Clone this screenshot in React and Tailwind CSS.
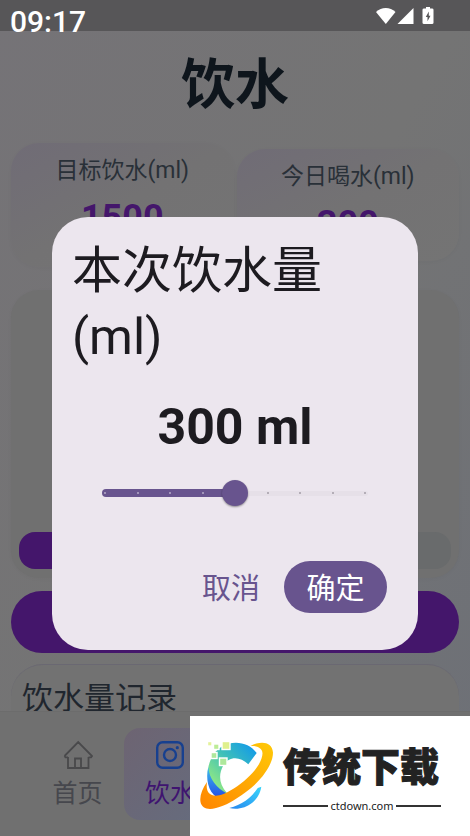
import { useState } from "react";

const TEXT = "font-['Roboto','Noto_Sans_CJK_SC',sans-serif]";

function StatusBar() {
  return (
    <header className="flex h-[31px] shrink-0 items-center justify-between bg-[#575658] pr-9 pl-[10px]">
      <span className="pt-3 text-[30px] leading-[30px] font-medium text-white">09:17</span>
      <svg className="h-[18px] w-[58px]" viewBox="0 0 58 18" fill="white" aria-hidden="true">
        <path d="M0 5C5.500-.5 14-.5 19.500 5L9.800 17z" />
        <path d="M37.500 1v16H21.500z" />
        <path
          fillRule="evenodd"
          d="M50 0h4v1.500h2q1.500 0 1.500 1.300v13q0 1.200-1.500 1.200h-8q-1.500 0-1.500-1.200v-13q0-1.300 1.500-1.300h2zM52.800 4.500l-3 5.500h1.700v4.300l3-5.500h-1.700z"
        />
      </svg>
    </header>
  );
}

function StatCard({ label, value, className }) {
  return (
    <section
      className={`flex flex-1 flex-col items-center rounded-[28px] bg-linear-to-br from-[#706c76] via-[#737273] to-[#747474] pt-3 shadow-[0_1px_4px_rgba(0,0,0,0.03)] ${className}`}
    >
      <h2 className="text-[23px] leading-8 text-[#293038]">{label}</h2>
      <p className="mt-[13px] text-[36px] leading-9 font-bold text-[#44166b]">{value}</p>
    </section>
  );
}

function HomeIcon() {
  return (
    <svg className="size-[30px]" viewBox="0 0 30 30" fill="none" stroke="#49494b" strokeWidth="1.800" aria-hidden="true">
      <path d="M5 17v11h20.500V17M1.500 16L15.200 2 29 16l-1 1.300h-2.500M1.500 16l1 1.300H5M12 28v-9.500h6V28" />
    </svg>
  );
}

function CameraIcon() {
  return (
    <svg className="size-[30px]" viewBox="0 0 30 30" fill="none" stroke="#17408f" strokeWidth="2.400" aria-hidden="true">
      <rect x="2.200" y="2.200" width="25.600" height="25.600" rx="5.500" />
      <circle cx="15" cy="15" r="6" />
      <circle cx="22.300" cy="7.700" r="1.600" fill="#17408f" stroke="none" />
    </svg>
  );
}

function Logo() {
  return (
    <svg className="h-[72px] w-[76px] shrink-0" viewBox="0 0 76 72" aria-hidden="true">
      <defs>
        <linearGradient id="arc" gradientUnits="userSpaceOnUse" x1="16" y1="46" x2="56" y2="8">
          <stop offset="0" stopColor="#8fe884" />
          <stop offset=".5" stopColor="#3fc0b8" />
          <stop offset="1" stopColor="#139be8" />
        </linearGradient>
        <linearGradient id="deep" x1="0" y1="0" x2="0" y2="1">
          <stop offset="0" stopColor="#3cbcec" />
          <stop offset="1" stopColor="#2450e6" />
        </linearGradient>
        <linearGradient id="ring" x1="0" y1="1" x2="1" y2="0">
          <stop offset="0" stopColor="#ff8500" />
          <stop offset="1" stopColor="#ffc907" />
        </linearGradient>
        <linearGradient id="foot" x1="0" y1="1" x2="1" y2="0">
          <stop offset="0" stopColor="#2787ef" />
          <stop offset="1" stopColor="#38d5fb" />
        </linearGradient>
      </defs>
      <path d="M57.700 13L49.300 24.300C41 16 30 16 24.500 25c-5 9-5 19 3.500 28l-7 3C8 48 6 32 12 19 21-1 47-2 57.700 13z" fill="url(#arc)" />
      <path d="M9.300 27c1 12 8 21 19.500 27l-11 3.500C9 51 6.500 39 9.300 27z" fill="url(#deep)" />
      <path d="M30.300 68c12-3 22-10 28.500-20l3.500-1.300C60 62 45 71.500 30.300 68z" fill="url(#foot)" />
      <path
        d="M51.500 6C61 1 73 1 74 12.500 74 27 58 46 39 57.500 22 69 4 74 1.500 62 .5 56 3 49 8 42c-2 13 6 16 16.500 12C43 46 63 27 63.500 13.500 63.500 8 58 5.500 51.500 6z"
        fill="url(#ring)"
      />
      <g stroke="white" strokeWidth="1.400">
        <rect x="23" y="1.500" width="8" height="8" fill="#dff08d" />
        <rect x="20.500" y="18" width="7.500" height="7.500" fill="#aee89c" />
        <rect x="12" y="12.500" width="6" height="6" fill="#aee89c" />
        <rect x="14.500" y="4" width="5.500" height="5.500" fill="#bcec96" />
        <rect x="8.500" y="1.500" width="4.500" height="4.500" fill="#e4f29b" />
      </g>
    </svg>
  );
}

function Watermark() {
  return (
    <aside className="fixed right-0 bottom-0 z-20 flex h-[120px] w-[280px] items-center bg-white pl-[9px]">
      <Logo />
      <div className="ml-2 flex w-[158px] flex-col pt-1">
        <p className="text-[39px] leading-[48px] font-black whitespace-nowrap text-[#222] [-webkit-text-stroke:1px_#222]">
          传统下载
        </p>
        <div className="mt-2 flex items-center gap-[2px]">
          <span className="h-[2px] flex-1 bg-[#333]" />
          <span className="font-['Noto_Sans',sans-serif] text-[11px] leading-3 text-[#222]">ctdown.com</span>
          <span className="h-[2px] flex-1 bg-[#333]" />
        </div>
      </div>
    </aside>
  );
}

const STEPS = [0, 1, 2, 3, 4, 5, 6, 7, 8];

function AmountDialog() {
  const [step, setStep] = useState(4);
  const percent = (step / 8) * 100;
  return (
    <div className="fixed inset-0 z-10 flex items-center justify-center px-[52px] pt-[31px]">
      <div
        role="dialog"
        aria-modal="true"
        aria-labelledby="dialog-title"
        className="w-full rounded-[36px] bg-[#ece6ee] px-5 pt-[21px] pb-[37px] text-[#1d1b20]"
      >
        <h2 id="dialog-title" className="text-[50px] leading-[66px]">
          本次饮水量(ml)
        </h2>
        <output htmlFor="amount" className="mt-6 block text-center text-[50px] leading-[66px] font-bold">
          {100 + step * 50} ml
        </output>
        <div className="relative mx-[30px] mt-5 h-[26px]">
          <div className="absolute inset-x-0 top-[11px] h-[5px] rounded-full bg-[#e6e0e8]" />
          <div className="absolute top-[9px] left-0 h-2 rounded-full bg-[#68548e]" style={{ width: `${percent}%` }} />
          <div className="absolute inset-x-[2px] top-3 flex justify-between">
            {STEPS.map((s) => (
              <span key={s} className={`size-[2px] rounded-full ${s < step ? "bg-[#b5aac7]" : "bg-[#a39ea7]"}`} />
            ))}
          </div>
          <input
            id="amount"
            type="range"
            aria-label="本次饮水量(ml)"
            min="0"
            max="8"
            value={step}
            onChange={(e) => setStep(Number(e.target.value))}
            className="absolute inset-0 h-[26px] w-full appearance-none bg-transparent [&::-webkit-slider-thumb]:size-[26px] [&::-webkit-slider-thumb]:appearance-none [&::-webkit-slider-thumb]:rounded-full [&::-webkit-slider-thumb]:bg-[#68548e] [&::-webkit-slider-thumb]:shadow-[0_1px_2px_rgba(0,0,0,0.4)]"
          />
        </div>
        <div className="mt-[55px] flex h-[52px] justify-end gap-6 pr-[11px] text-[29px] leading-[48px]">
          <button type="button" className="pt-1 text-[#68548e]">
            取消
          </button>
          <button type="button" className="w-[103px] rounded-full bg-[#68548e] pt-1 text-white">
            确定
          </button>
        </div>
      </div>
    </div>
  );
}

export default function App() {
  return (
    <div className={`flex h-screen flex-col overflow-hidden bg-linear-to-br from-[#757377] via-[#747474] to-[#6d7077] ${TEXT}`}>
      <StatusBar />
      <main className="flex min-h-0 flex-1 flex-col overflow-hidden px-[11px]">
        <h1 className="pt-4 text-center text-[54px] leading-[78px] font-bold text-[#0e151c]">饮水</h1>
        <div className="mt-[18px] flex items-center gap-[3px]">
          <StatCard label="目标饮水(ml)" value="1500" className="h-[124px]" />
          <StatCard label="今日喝水(ml)" value="300" className="h-[112px]" />
        </div>
        <section className="mt-[23px] flex h-[288px] shrink-0 flex-col justify-end rounded-[28px] bg-[#707070] px-2 pb-[9px] shadow-[0_1px_4px_rgba(0,0,0,0.03)]">
          <div className="h-[37px] overflow-hidden rounded-2xl bg-[#696b6c]">
            <div className="h-full w-1/5 bg-[#44166b]" />
          </div>
        </section>
        <button type="button" aria-label="饮水" className="mt-[13px] h-[62px] shrink-0 rounded-[31px] bg-[#44166b]" />
        <section className="mt-[11px] shrink-0 rounded-[32px] border-t border-[#6a6872] bg-[#727272] px-[11px] pt-[11px] pb-8">
          <h2 className="text-[31px] leading-[46px] text-[#20262e]">饮水量记录</h2>
        </section>
      </main>
      <nav className="flex h-[125px] shrink-0 items-center border-t border-[#6c6c6c] bg-[#707070] pr-8 pl-[31px]">
        <a href="#home" className="flex h-[92px] w-[93px] flex-col items-center pt-3 text-[25px] leading-9 text-[#46474d]">
          <HomeIcon />
          <span className="mt-[6px]">首页</span>
        </a>
        <a
          href="#water"
          className="flex h-[92px] w-[92px] flex-col items-center rounded-2xl bg-linear-to-br from-[#6d6472] to-[#656c7e] pt-3 text-[25px] leading-9 text-[#3f1470]"
        >
          <CameraIcon />
          <span className="mt-[6px]">饮水</span>
        </a>
      </nav>
      <AmountDialog />
      <Watermark />
    </div>
  );
}
